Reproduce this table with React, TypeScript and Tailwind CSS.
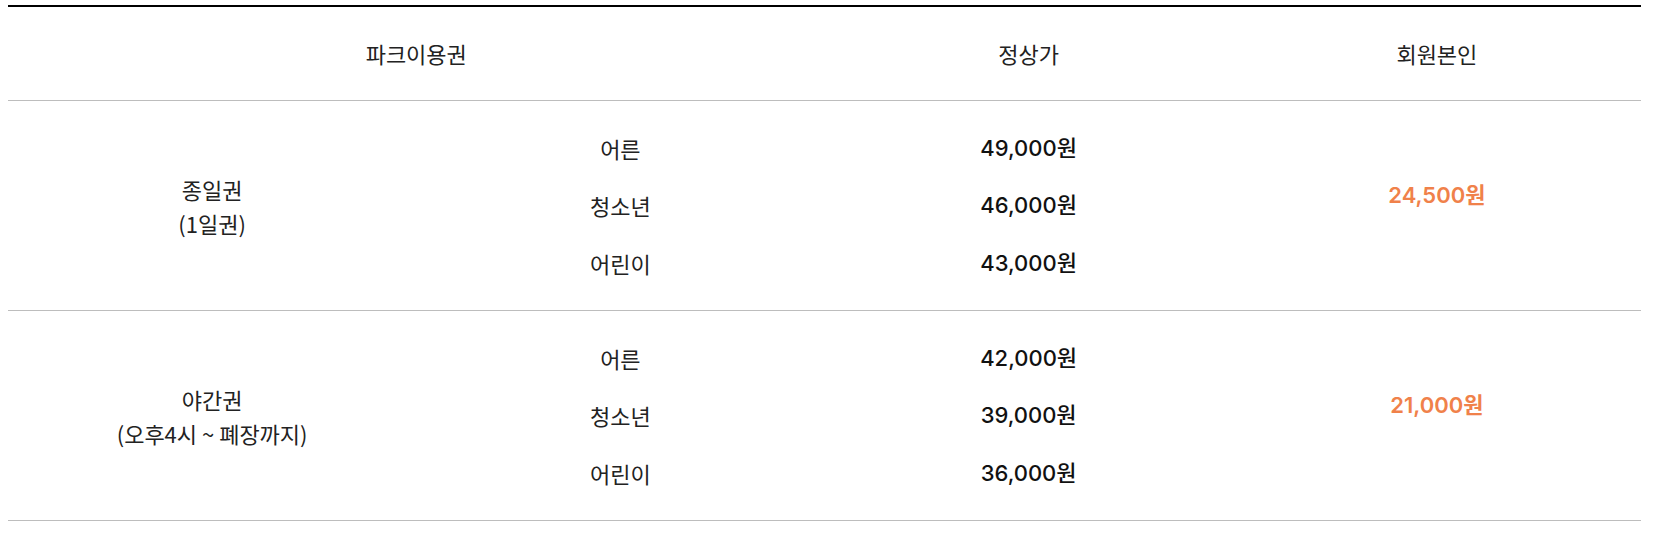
import React from "react";

const kr = { fontFamily: '"Noto Sans CJK KR", "Noto Sans", sans-serif' };
const num = { fontFamily: 'Inter, "Noto Sans CJK KR", sans-serif' };

type Row = { name: string; sub: string; prices: string[]; member: string };

const rows: Row[] = [
  { name: "종일권", sub: "(1일권)", prices: ["49,000원", "46,000원", "43,000원"], member: "24,500원" },
  { name: "야간권", sub: "(오후4시 ~ 폐장까지)", prices: ["42,000원", "39,000원", "36,000원"], member: "21,000원" },
];

const ages = ["어른", "청소년", "어린이"];

export default function App() {
  return (
    <div className="w-[1654px] h-[536px] bg-white px-[8px] pt-[5px] text-[#222]" style={kr}>
      <div className="w-[1633px] border-t-2 border-black">
        <div className="grid grid-cols-4 h-[94px] items-center border-b border-[#bdbdbd] text-[22px]">
          <div className="col-span-2 text-center">파크이용권</div>
          <div className="text-center">정상가</div>
          <div className="text-center">회원본인</div>
        </div>
        {rows.map((r) => (
          <div key={r.name} className="grid grid-cols-4 h-[210px] items-center border-b border-[#bdbdbd] text-[22px]">
            <div className="text-center leading-[34px]">
              <div>{r.name}</div>
              <div>{r.sub}</div>
            </div>
            <div className="flex flex-col">
              {ages.map((a) => (
                <div key={a} className="h-[57.5px] flex items-center justify-center">{a}</div>
              ))}
            </div>
            <div className="flex flex-col" style={num}>
              {r.prices.map((p) => (
                <div key={p} className="h-[57.5px] flex items-center justify-center font-medium text-[#111]">{p}</div>
              ))}
            </div>
            <div className="text-center font-semibold text-[#f0814a] pb-[20px]" style={num}>
              {r.member}
            </div>
          </div>
        ))}
      </div>
    </div>
  );
}
